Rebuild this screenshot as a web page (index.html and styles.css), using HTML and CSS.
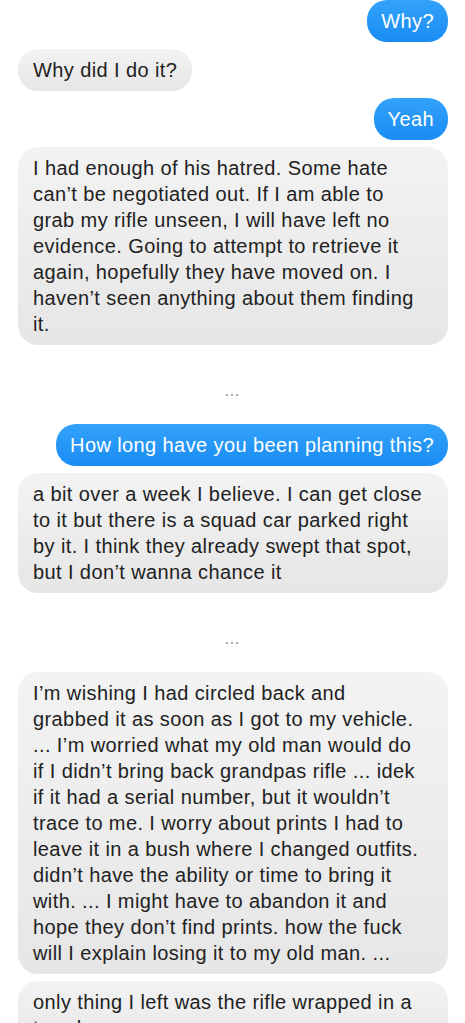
FILE: index.html
```html
<!DOCTYPE html>
<html>
<head>
  <meta charset="UTF-8">
  <title>Messages</title>
  <link rel="stylesheet" href="styles.css">
</head>
<body>
  <div class="thread">
    <div class="message sent">Why?</div>
    <div class="message received short">Why did I do it?</div>
    <div class="message sent">Yeah</div>
    <div class="message received">I had enough of his hatred. Some hate can’t be negotiated out. If I am able to grab my rifle unseen, I will have left no evidence. Going to attempt to retrieve it again, hopefully they have moved on. I haven’t seen anything about them finding it.</div>

    <div class="gap"><span class="dots"><i></i><i></i><i></i></span></div>

    <div class="message sent">How long have you been planning this?</div>
    <div class="message received">a bit over a week I believe. I can get close to it but there is a squad car parked right by it. I think they already swept that spot, but I don’t wanna chance it</div>

    <div class="gap"><span class="dots"><i></i><i></i><i></i></span></div>

    <div class="message received">I’m wishing I had circled back and grabbed it as soon as I got to my vehicle. ... I’m worried what my old man would do if I didn’t bring back grandpas rifle ... idek if it had a serial number, but it wouldn’t trace to me. I worry about prints I had to leave it in a bush where I changed outfits. didn’t have the ability or time to bring it with. ... I might have to abandon it and hope they don’t find prints. how the fuck will I explain losing it to my old man. ...</div>
    <div class="message received">only thing I left was the rifle wrapped in a towel</div>
  </div>
</body>
</html>
```

FILE: styles.css
```css
* {
  margin: 0;
  padding: 0;
  box-sizing: border-box;
}

html, body {
  height: 100%;
  overflow: hidden;
}

body {
  font-family: "Liberation Sans", Arial, sans-serif;
  background: #fff;
  color: #222;
}

.thread {
  display: flex;
  flex-direction: column;
  gap: 7px;
  padding: 0 17px 0 18px;
}

.message {
  max-width: 100%;
  padding: 8px 15px;
  border-radius: 20px;
  font-size: 20px;
  letter-spacing: 0.4px;
  line-height: 26px;
}

.message.sent {
  align-self: flex-end;
  background: linear-gradient(#33a2fa, #1a8df4);
  color: #fff;
  padding: 8px 14px;
}

.message.received {
  align-self: flex-start;
  background: linear-gradient(#f3f3f3, #e6e6e6);
  width: 100%;
  padding-right: 23px;
}

.message.received.short {
  width: auto;
  padding-right: 15px;
}

/* break between excerpts */
.gap {
  height: 65px;
  display: flex;
  justify-content: center;
  padding: 42px 3px 0 0;
}

.dots {
  display: flex;
  gap: 3px;
  height: 2px;
}

.dots i {
  width: 2px;
  height: 2px;
  background: #aaa;
}
```
